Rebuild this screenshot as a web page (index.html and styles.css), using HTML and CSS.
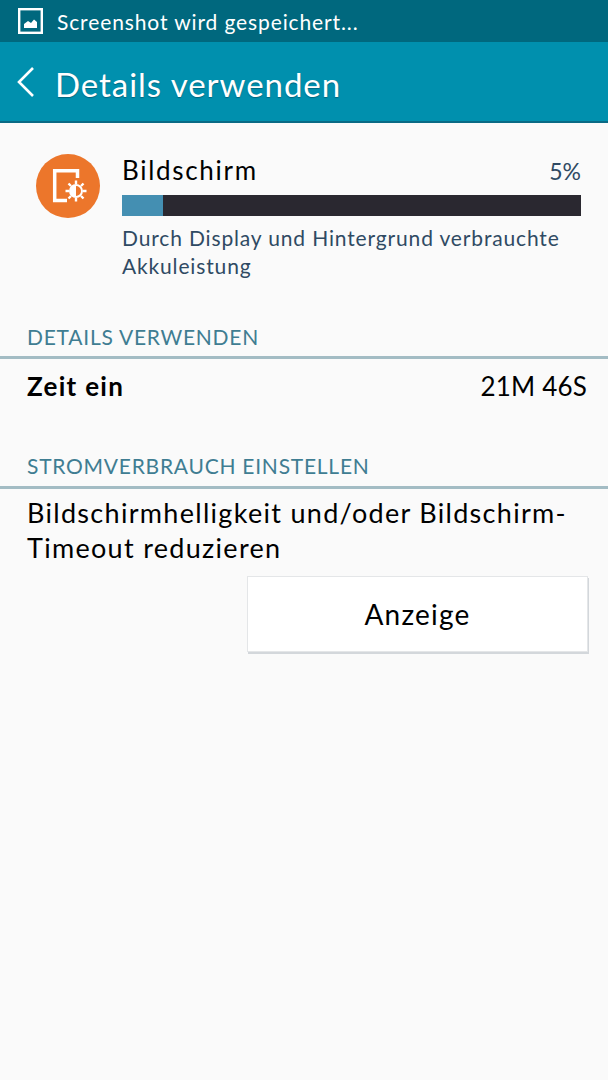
FILE: index.html
```html
<!DOCTYPE html>
<html lang="de">
<head>
    <meta charset="UTF-8">
    <meta name="viewport" content="width=device-width, initial-scale=1.0">
    <title>Details verwenden</title>
    <link rel="stylesheet" href="styles.css">
</head>
<body>
    <!-- Statusleiste -->
    <div class="status-bar">
        <svg class="status-icon" width="25" height="26" viewBox="0 0 25 26">
            <rect x="1.200" y="1.200" width="22.600" height="23.600" fill="none" stroke="#fff" stroke-width="2.400"/>
            <path d="M6 20V16L10 13L13 15L16 11.500L19 14V20Z" fill="#fff"/>
        </svg>
        <span class="status-text">Screenshot wird gespeichert...</span>
    </div>

    <!-- Titelleiste -->
    <header class="action-bar">
        <svg class="back-icon" width="20" height="32" viewBox="0 0 20 32">
            <path d="M17 2L3 16L17 30" fill="none" stroke="#fff" stroke-width="2.600"/>
        </svg>
        <h1 class="action-title">Details verwenden</h1>
    </header>

    <main class="content">
        <!-- Bildschirm Verbrauch -->
        <section class="usage">
            <div class="usage-icon">
                <svg width="64" height="64" viewBox="0 0 64 64">
                    <path d="M41.500 15V24M31 46.500H18.700V16.700H43" fill="none" stroke="#fff" stroke-width="3.500"/>
                    <circle cx="40" cy="37" r="6" fill="none" stroke="#fff" stroke-width="2"/>
                    <path d="M40 31A6 6 0 0 0 40 43Z" fill="#fff"/>
                    <path d="M40 26.500V30M40 44V47.500M29.500 37H33M47 37H50.500M32.500 29.500L35 32M45 42L47.500 44.500M32.500 44.500L35 42M45 32L47.500 29.500" stroke="#fff" stroke-width="2.400"/>
                </svg>
            </div>
            <div class="usage-info">
                <div class="usage-head">
                    <span class="usage-name">Bildschirm</span>
                    <span class="usage-percent">5%</span>
                </div>
                <div class="usage-bar">
                    <div class="usage-fill"></div>
                </div>
                <p class="usage-desc">Durch Display und Hintergrund verbrauchte Akkuleistung</p>
            </div>
        </section>

        <!-- Details -->
        <h2 class="section-title section-details">DETAILS VERWENDEN</h2>
        <div class="detail-row">
            <span class="detail-label">Zeit ein</span>
            <span class="detail-value">21M 46S</span>
        </div>

        <!-- Stromverbrauch -->
        <h2 class="section-title section-power">STROMVERBRAUCH EINSTELLEN</h2>
        <p class="power-text">Bildschirmhelligkeit und/oder Bildschirm-<br>Timeout reduzieren</p>
        <div class="button-row">
            <button class="display-button">Anzeige</button>
        </div>
    </main>
</body>
</html>
```

FILE: styles.css
```css
/* Grundlayout */
* {
    margin: 0;
    padding: 0;
    box-sizing: border-box;
}

html, body {
    height: 100%;
    background-color: #fafafa;
    color: black;
    font-family: 'Lato', 'Open Sans', sans-serif;
    overflow: hidden;
}

/* Statusleiste */
.status-bar {
    display: flex;
    align-items: center;
    height: 42px;
    padding-left: 18px;
    gap: 14px;
    background-color: #00687e;
}

.status-text {
    color: white;
    font-size: 21px;
    letter-spacing: 0.88px;
}

/* Titelleiste */
.action-bar {
    display: flex;
    align-items: center;
    height: 81px;
    padding-left: 16px;
    gap: 19px;
    background-color: #0090ae;
    border-bottom: 2px solid #0a6a85;
}

.action-title {
    padding-top: 4px;
    color: white;
    font-size: 33px;
    font-weight: 400;
    letter-spacing: 0.95px;
    text-shadow: 0 1px 1px rgba(0, 60, 80, 0.5);
}

/* Verbrauch */
.usage {
    display: flex;
    padding: 31px 27px 0 36px;
    gap: 22px;
}

.usage-icon {
    flex: none;
    width: 64px;
    height: 64px;
    border-radius: 50%;
    background-color: #ec762b;
}

.usage-info {
    flex: 1;
}

.usage-head {
    display: flex;
    justify-content: space-between;
    align-items: baseline;
    height: 41px;
    line-height: 33px;
}

.usage-name {
    font-size: 26px;
    letter-spacing: 1.7px;
}

.usage-percent {
    font-size: 23px;
    color: #2f4a63;
}

.usage-bar {
    height: 21px;
    background-color: #2a2830;
}

.usage-fill {
    width: 41px;
    height: 100%;
    background-color: #448fb2;
}

.usage-desc {
    margin-top: 8px;
    font-size: 21px;
    line-height: 28px;
    letter-spacing: 0.85px;
    color: #2f4a63;
}

/* Abschnitte */
.section-title {
    padding: 0 0 4px 27px;
    font-size: 21px;
    font-weight: 400;
    line-height: 30px;
    letter-spacing: 0.75px;
    color: #3f7d92;
    border-bottom: 3px solid #a3bcc4;
}

.section-details {
    margin-top: 42px;
}

.section-power {
    margin-top: 32px;
    padding-bottom: 5px;
}

.detail-row {
    display: flex;
    justify-content: space-between;
    padding: 10px 21px 0 27px;
    height: 60px;
    line-height: 34px;
    font-size: 26px;
}

.detail-label {
    font-weight: 700;
    letter-spacing: 1.3px;
}

.detail-value {
    letter-spacing: 0.2px;
}

.power-text {
    padding: 6px 20px 0 27px;
    font-size: 27px;
    line-height: 35px;
    letter-spacing: 1.3px;
}

/* Button */
.button-row {
    display: flex;
    justify-content: flex-end;
    padding: 11px 20px 0 0;
}

.display-button {
    width: 341px;
    height: 76px;
    background-color: white;
    border: 1px solid #e4e6e8;
    box-shadow: 1px 2px 0 #d3d7db;
    font-family: inherit;
    font-size: 28px;
    letter-spacing: 1.2px;
    color: black;
}
```
